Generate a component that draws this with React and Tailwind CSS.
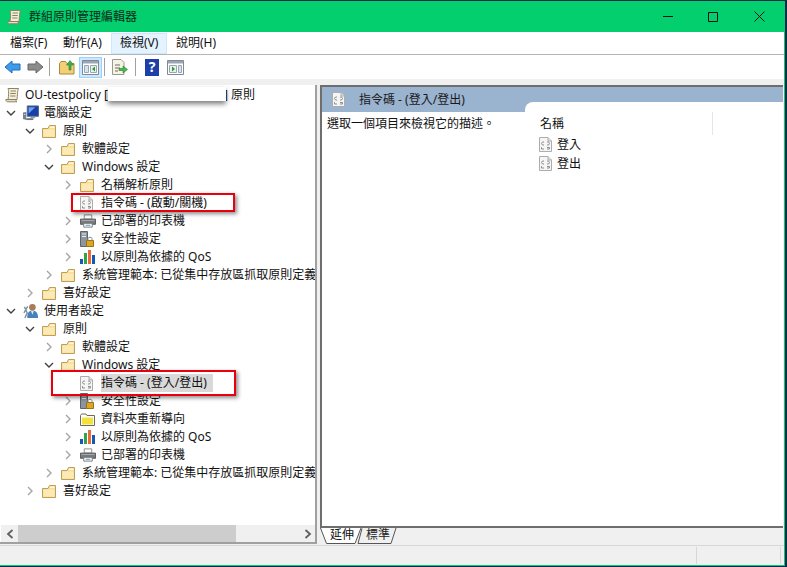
const Folder = () => (
  <svg width="14" height="13" viewBox="0 0 14 13">
    <path d="M.5 3.5V12.5H13.5V.5H7.5L6 3.5Z" fill="#f8dd96" stroke="#bf9f58" />
    <path d="M1.5 4.5H12.5V11.5H1.5Z" fill="#fbe9b6" />
    <path d="M8 1.5H12.5V3H8Z" fill="#fff6dc" />
  </svg>
);

const YellowFolder = () => (
  <svg width="15" height="13" viewBox="0 0 15 13">
    <path d="M.5 2.5L1.5 1H6L7 2.5H14.5V12.5H.5Z" fill="#fff" stroke="#6f6a55" />
    <path d="M2 4.5H13V11.5H2Z" fill="#f4e23c" />
  </svg>
);

const Script = () => (
  <svg width="13" height="15" viewBox="0 0 13 15">
    <path d="M.5.5H9L12.5 4V14.5H.5Z" fill="#f5f5f5" stroke="#adadad" />
    <path d="M9 .5V4H12.5" fill="#e2e2e2" stroke="#adadad" />
    <path d="M5 5H3.5L2.5 6.5L3.5 8H5M8 5H9.5L10.5 6.5L9.5 8H8M3 10.5H2.5V12H5M8 10.5H10.5V12H8" fill="none" stroke="#8c8c8c" />
  </svg>
);

const Scroll = ({ w = 15, h = 16 }) => (
  <svg width={w} height={h} viewBox="0 0 15 16">
    <path d="M3 1.5H13.5C12.5 3 12.5 9 12 12.5H3C3.8 9 3.8 3 3 1.5Z" fill="#f4edd8" stroke="#8c8266" />
    <path d="M.8 12.5H11C11 14 11.5 14.8 12 14.8H2.5C1.5 14.8.8 13.8.8 12.5Z" fill="#e8dfc2" stroke="#8c8266" />
    <path d="M5.5 4H11M5.3 6.5H10.8M5.2 9H10.5" stroke="#8c8266" />
  </svg>
);

const Computer = () => (
  <svg width="17" height="16" viewBox="0 0 17 16">
    <path d="M0 7.5L3.5 7V15.5L0 14.5Z" fill="#76808f" />
    <path d="M1 9H2.5V10H1Z" fill="#d5dae0" />
    <path d="M3.5 13.5H11V15.5H3.5Z" fill="#6f7785" />
    <path d="M4.5.5H16.5V11.5H4.5Z" fill="#1740a8" stroke="#5a667a" />
    <path d="M6 2H13L6 8.5Z" fill="#6ea2ef" />
    <path d="M8 12H13V13.5H8Z" fill="#98a0ac" />
  </svg>
);

const User = () => (
  <svg width="17" height="16" viewBox="0 0 17 16">
    <circle cx="10" cy="4" r="3.5" fill="#a97c56" />
    <path d="M4.5 15.5C4.5 9.5 6.5 7.5 10 7.5C13.5 7.5 16 9.5 16 15.5Z" fill="#4a80b8" />
    <path d="M8.5 8L10 12L11.5 8Z" fill="#dfe8f0" />
    <path d="M1.5 3.5L4.5 10L2 15.5M5 3L1 10" stroke="#7f909c" strokeWidth="1.5" fill="none" />
  </svg>
);

const Printer = () => (
  <svg width="17" height="14" viewBox="0 0 17 14">
    <path d="M4.5.5H12.5V5H4.5Z" fill="#fff" stroke="#8a8a8a" />
    <path d="M.5 5H16.5V10.5H.5Z" fill="#77797c" stroke="#55585c" />
    <path d="M1.5 6H15.5V7H1.5Z" fill="#a9abae" />
    <path d="M4 9.5H13V13.5H4Z" fill="#fff" stroke="#77797c" />
    <path d="M6 11.5H11" stroke="#4f8fcb" />
  </svg>
);

const Security = () => (
  <svg width="14" height="16" viewBox="0 0 14 16">
    <path d="M.5.5H7.5V15.5H.5Z" fill="#8d949c" stroke="#5d646c" />
    <path d="M2 2.5H6V3.5H2ZM2 5H6V6H2Z" fill="#eceff2" />
    <path d="M6.5 9.5H13.5V15.5H6.5Z" fill="#d9a628" stroke="#9a7312" />
    <path d="M8 9.5V7.5C8 5.8 12 5.8 12 7.5V9.5" fill="none" stroke="#8a8a8a" />
  </svg>
);

const Qos = () => (
  <svg width="16" height="14" viewBox="0 0 16 14">
    <path d="M0 9H3V14H0Z" fill="#1458b8" />
    <path d="M4 3H7V14H4Z" fill="#35a24a" />
    <path d="M8 0H11V14H8Z" fill="#ea6a3c" />
    <path d="M12 5H15V14H12Z" fill="#1458b8" />
  </svg>
);

const icons = {
  folder: <Folder />,
  yellow: <YellowFolder />,
  script: <Script />,
  computer: <Computer />,
  user: <User />,
  printer: <Printer />,
  security: <Security />,
  qos: <Qos />,
};

const Chevron = ({ open }) => (
  <svg width="10" height="10" viewBox="0 0 10 10" fill="none">
    {open ? (
      <path d="M1 3L5 7L9 3" stroke="#404040" strokeWidth="1.4" />
    ) : (
      <path d="M3 1L7 5L3 9" stroke="#a6a6a6" strokeWidth="1.4" />
    )}
  </svg>
);

const indents = ["pl-[6px]", "pl-[25px]", "pl-[44px]", "pl-[63px]"];

const printer = "已部署的印表機";
const qos = "以原則為依據的 QoS";
const admin = "系統管理範本: 已從集中存放區抓取原則定義";

// level, icon, label, chevron state (null = no chevron)
const rows = [
  [0, "computer", "電腦設定", true],
  [1, "folder", "原則", true],
  [2, "folder", "軟體設定", false],
  [2, "folder", "Windows 設定", true],
  [3, "folder", "名稱解析原則", false],
  [3, "script", "指令碼 - (啟動/關機)", null],
  [3, "printer", printer, false],
  [3, "security", "安全性設定", false],
  [3, "qos", qos, false],
  [2, "folder", admin, false],
  [1, "folder", "喜好設定", false],
  [0, "user", "使用者設定", true],
  [1, "folder", "原則", true],
  [2, "folder", "軟體設定", false],
  [2, "folder", "Windows 設定", true],
  [3, "script", "指令碼 - (登入/登出)", null, true],
  [3, "security", "安全性設定", false],
  [3, "yellow", "資料夾重新導向", false],
  [3, "qos", qos, false],
  [3, "printer", printer, false],
  [2, "folder", admin, false],
  [1, "folder", "喜好設定", false],
];

const TreeRow = ({ level, icon, label, open, selected }) => (
  <div className={`flex h-[18px] items-center whitespace-nowrap ${indents[level]}`}>
    <span className="flex w-[10px] shrink-0 justify-center">
      {open !== null && <Chevron open={open} />}
    </span>
    <span className="ml-[7px] flex h-[18px] w-[16px] shrink-0 items-center">{icons[icon]}</span>
    <span className={`ml-[5px] h-[18px] leading-[18px] ${selected ? "bg-[#d9d9d9] pr-[6px]" : ""}`}>
      {label}
    </span>
  </div>
);

const Menu = ({ children, active, className }) => (
  <div
    className={`flex h-[21px] items-center border pl-[8px] ${className} ${
      active ? "border-[#cce8ff] bg-[#e5f3ff]" : "border-transparent"
    }`}
  >
    {children}
  </div>
);

const Sep = () => <div className="h-[18px] w-px bg-[#a0a0a0]" />;

const RedBox = ({ className }) => (
  <div
    className={`absolute border-[2px] border-[#e8000d] shadow-[2px_2px_4px_rgba(0,0,0,0.45)] ${className}`}
  />
);

const ArrowBtn = ({ flip, color, dark }) => (
  <svg width="17" height="14" viewBox="0 0 17 14" className={flip ? "-scale-x-100" : ""}>
    <path d="M1 7L8 1V4H16V10H8V13Z" fill={color} stroke={dark} />
  </svg>
);

const PaneIcon = ({ right }) => (
  <svg width="17" height="15" viewBox="0 0 17 15">
    <path d="M.5.5H16.5V14.5H.5Z" fill="#fff" stroke="#7f8a96" />
    <path d="M1 1H16V3.5H1Z" fill="#9aa6b2" />
    {right ? (
      <>
        <path d="M2.5 5.5H9.5V12.5H2.5Z" fill="#e8f2e8" stroke="#9aa6b2" />
        <path d="M5 6.5L8 9L5 11.5Z" fill="#2f9a3c" />
        <path d="M11.5 5.5H14.5V12.5H11.5Z" fill="#d6e4f2" stroke="#9aa6b2" />
      </>
    ) : (
      <>
        <path d="M2.5 5.5H6.5V12.5H2.5Z" fill="#d6e4f2" stroke="#9aa6b2" />
        <path d="M8.5 5.5H14.5V12.5H8.5Z" fill="#e8f2e8" stroke="#9aa6b2" />
        <path d="M13 6.5L10 9L13 11.5Z" fill="#2f9a3c" />
      </>
    )}
  </svg>
);

export default function App() {
  return (
    <div className="h-[567px] w-[787px] overflow-hidden bg-[#0b2a4c] pt-px font-['Noto_Sans','Noto_Sans_CJK_TC',sans-serif] text-[12px] text-[#111]">
      <div className="flex h-[565px] w-[785px] flex-col border-r border-b border-[#03cf6e] bg-[#f0f0f0]">
        {/* title bar */}
        <div className="flex h-[31px] shrink-0 items-center bg-[#03cf6e] pl-[7px]">
          <Scroll />
          <span className="ml-[7px] text-[12px] text-[#0a2a1a]">群組原則管理編輯器</span>
          <div className="ml-auto flex items-center">
            <svg width="11" height="11" viewBox="0 0 11 11" className="mr-[34px]">
              <path d="M0 5.5H10" stroke="#111" />
            </svg>
            <svg width="10" height="10" viewBox="0 0 10 10" className="mr-[36px]">
              <path d="M.5.5H9.5V9.5H.5Z" fill="none" stroke="#111" />
            </svg>
            <svg width="11" height="11" viewBox="0 0 11 11" className="mr-[19px]">
              <path d="M.5.5L10.5 10.5M10.5.5L.5 10.5" stroke="#111" />
            </svg>
          </div>
        </div>

        {/* menu */}
        <div className="flex h-[23px] shrink-0 items-center border-b border-[#b5b5b5] bg-white pl-px">
          <Menu className="w-[53px]">檔案(F)</Menu>
          <Menu className="w-[57px]">動作(A)</Menu>
          <Menu active className="w-[56px]">檢視(V)</Menu>
          <Menu className="w-[56px]">說明(H)</Menu>
        </div>

        {/* toolbar */}
        <div className="flex h-[24px] shrink-0 items-center bg-white pl-[4px]">
          <ArrowBtn color="#3f9be8" dark="#1c6fc0" />
          <div className="w-[6px]" />
          <ArrowBtn flip color="#8c8c8c" dark="#666" />
          <div className="w-[5px]" />
          <Sep />
          <div className="w-[9px]" />
          <svg width="17" height="16" viewBox="0 0 17 16">
            <path d="M.5 4.5V15H15V4.5H8L6.5 2.5H2Z" fill="#f4cf76" stroke="#a88a3a" />
            <path d="M10 11V6H7.5L11 1.5L14.5 6H12V11Z" fill="#3fae4a" stroke="#2b7f34" strokeWidth=".6" />
          </svg>
          <div className="ml-[3px] flex h-[21px] w-[23px] items-center justify-center border border-[#99d1ff] bg-[#cce8ff]">
            <PaneIcon />
          </div>
          <div className="w-[2px]" />
          <Sep />
          <div className="w-[7px]" />
          <svg width="16" height="16" viewBox="0 0 16 16">
            <path d="M.5.5H9L12 3.5V15.5H.5Z" fill="#f6f2e4" stroke="#9a9a8a" />
            <path d="M3 6H8M3 9H8M3 12H6" stroke="#6a6a6a" />
            <path d="M7 9.5H11V7L15.5 10.5L11 14V11.5H7Z" fill="#45b94f" stroke="#2b7f34" strokeWidth=".6" />
          </svg>
          <div className="w-[7px]" />
          <Sep />
          <div className="w-[9px]" />
          <div className="flex h-[17px] w-[14px] items-center justify-center bg-[#1d3fa8] text-[14px] leading-none font-bold text-white">
            ?
          </div>
          <div className="w-[8px]" />
          <PaneIcon right />
        </div>

        <div className="h-[6px] shrink-0 bg-[#f0f0f0]" />

        {/* panes */}
        <div className="flex h-[459px] shrink-0">
          {/* tree */}
          <div className="relative flex w-[317px] shrink-0 flex-col overflow-hidden border-r-[2px] border-b-[2px] border-[#a0a0a0] bg-white">
            <div className="flex-1 overflow-hidden">
              <div className="flex h-[19px] items-center whitespace-nowrap pl-[5px]">
                <Scroll />
                <span className="ml-[5px]">OU-testpolicy [</span>
                <span className="ml-[116px]">] 原則</span>
              </div>
              <div className="h-[437px] overflow-hidden">
                {rows.map(([level, icon, label, open, selected], i) => (
                  <TreeRow key={i} level={level} icon={icon} label={label} open={open} selected={selected} />
                ))}
              </div>
            </div>

            {/* horizontal scrollbar */}
            <div className="absolute bottom-0 left-px flex h-[17px] w-[315px] items-center bg-[#f0f0f0]">
              <span className="flex w-[17px] shrink-0 justify-center">
                <svg width="8" height="10" viewBox="0 0 8 10" fill="none">
                  <path d="M6.5 1L2 5L6.5 9" stroke="#606060" strokeWidth="1.8" />
                </svg>
              </span>
              <div className="h-[17px] w-[218px] bg-[#cdcdcd]" />
              <span className="ml-auto flex w-[17px] justify-center">
                <svg width="8" height="10" viewBox="0 0 8 10" fill="none">
                  <path d="M1.5 1L6 5L1.5 9" stroke="#606060" strokeWidth="1.8" />
                </svg>
              </span>
            </div>

            {/* redacted name and annotations */}
            <div className="absolute top-[2px] left-[108px] h-[14px] w-[118px] bg-white shadow-[0_3px_5px_rgba(0,0,0,0.5)]" />
            <RedBox className="top-[108px] left-[71px] h-[19px] w-[164px]" />
            <RedBox className="top-[285px] left-[51px] h-[26px] w-[185px]" />
          </div>

          {/* result pane */}
          <div className="ml-[3px] flex min-w-0 w-[463px] shrink-0 flex-col">
            <div className="relative flex-1 overflow-hidden border-t-[2px] border-l-[2px] border-[#6e6e6e] bg-white">
              <div className="flex h-[25px] items-center bg-[#9ab3cf] pl-[10px]">
                <Script />
                <span className="ml-[14px] text-[#1a1a1a]">指令碼 - (登入/登出)</span>
              </div>
              <div className="flex">
                <div className="w-[203px] shrink-0 pt-[3px] pl-[5px]">選取一個項目來檢視它的描述。</div>
                <div className="relative z-10 -mt-[10px] flex-1 rounded-tl-[8px] bg-white pt-[10px]">
                  <div className="flex h-[23px] items-center">
                    <span className="ml-[15px] w-[173px] border-r border-[#e5e5e5] leading-[23px]">名稱</span>
                  </div>
                  <div className="flex h-[19px] items-center pl-[14px]">
                    <Script />
                    <span className="ml-[5px]">登入</span>
                  </div>
                  <div className="flex h-[19px] items-center pl-[14px]">
                    <Script />
                    <span className="ml-[5px]">登出</span>
                  </div>
                </div>
              </div>
            </div>

            {/* tabs */}
            <div className="flex h-[18px] shrink-0 border-t-[2px] border-[#6e6e6e] bg-[#f0f0f0]">
              <div className="relative flex h-[16px] w-[42px] items-center justify-center pb-[3px] pl-[2px]">
                <svg width="42" height="16" viewBox="0 0 42 16" className="absolute top-0 left-0">
                  <path d="M.5 0L6.5 15.5H35L41 0" fill="#fff" stroke="#555" />
                </svg>
                <span className="relative text-[#111]">延伸</span>
              </div>
              <div className="relative -ml-[5px] flex h-[16px] w-[40px] items-center justify-center pb-[3px] pl-[2px]">
                <svg width="40" height="16" viewBox="0 0 40 16" className="absolute top-0 left-0">
                  <path d="M5 0.5L1 15.5H34L39 0" fill="none" stroke="#555" />
                </svg>
                <span className="relative text-[#222]">標準</span>
              </div>
            </div>
          </div>
        </div>

        {/* status bar */}
        <div className="mt-[1px] flex h-[22px] flex-1 items-stretch border-t border-[#d7d7d7] bg-[#f0f0f0] py-[1px] pl-[696px]">
          <div className="w-[85px] border-x border-[#d7d7d7]" />
        </div>
      </div>
    </div>
  );
}
